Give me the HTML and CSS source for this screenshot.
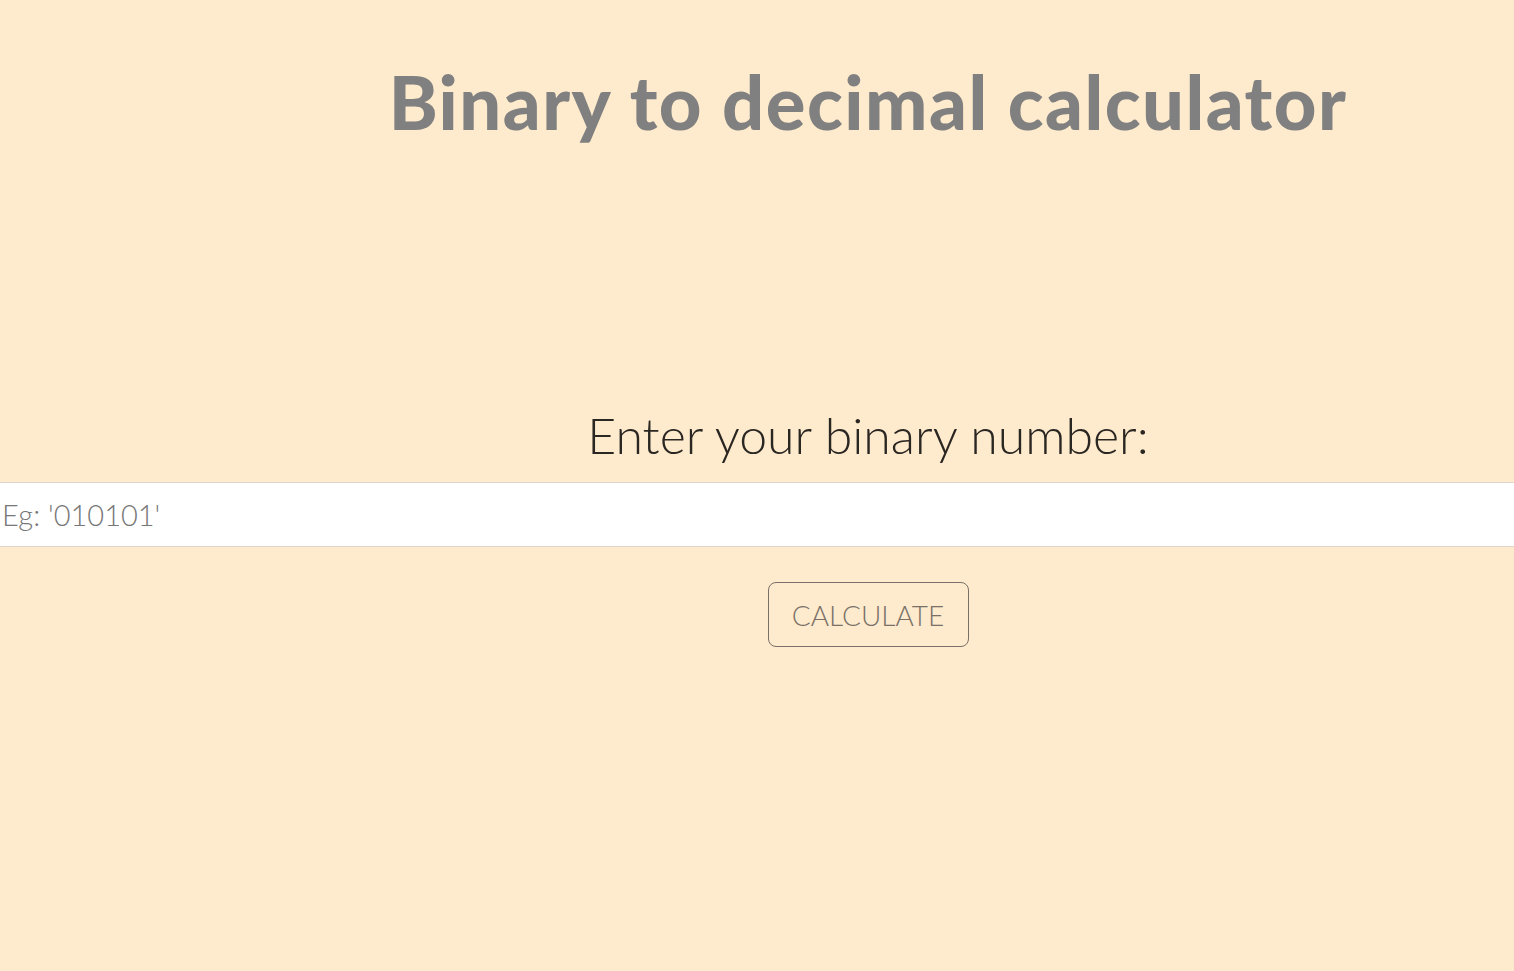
FILE: index.html
```html
<!DOCTYPE html>
<html>
<head>
<meta charset="utf-8">
<link rel="stylesheet" href="styles.css">
</head>
<body>
<div class="page">
  <h1 class="title">Binary to decimal calculator</h1>
  <label class="label" for="bin">Enter your binary number:</label>
  <input class="field" id="bin" type="text" placeholder="Eg: '010101'">
  <div class="actions">
    <button class="btn" type="button">CALCULATE</button>
  </div>
</div>
</body>
</html>
```
FILE: styles.css
```css
html, body {
  margin: 0;
  padding: 0;
  background: #feebcd;
}
body {
  font-family: Lato, "Noto Sans", sans-serif;
  height: 971px;
  overflow: hidden;
}
.page {
  display: flex;
  flex-direction: column;
  align-items: stretch;
}
.title {
  margin: 57px 0 0 222px;
  text-align: center;
  font-size: 74px;
  font-weight: 900;
  letter-spacing: 1.5px;
  color: #808080;
  line-height: 90px;
}
.label {
  display: block;
  margin: 258px 0 0 222px;
  text-align: center;
  font-size: 50px;
  font-weight: 300;
  color: #2a2622;
  line-height: 60px;
}
.field {
  box-sizing: border-box;
  margin: 17px 0 0 0;
  width: 100%;
  height: 65px;
  border: none;
  border-top: 1px solid #dcd6cf;
  border-bottom: 1px solid #dcd6cf;
  background: #ffffff;
  padding: 0 2px;
  font-family: Lato, "Noto Sans", sans-serif;
  font-size: 29px;
  font-weight: 300;
  outline: none;
}
.field::placeholder {
  color: #777777;
}
.actions {
  display: flex;
  justify-content: center;
  margin: 35px 0 0 222px;
}
.btn {
  width: 201px;
  height: 65px;
  border: 1px solid #7a7068;
  border-radius: 8px;
  background: transparent;
  color: #7a7068;
  font-family: Lato, "Noto Sans", sans-serif;
  font-size: 28px;
  font-weight: 300;
  padding: 0;
}
```
